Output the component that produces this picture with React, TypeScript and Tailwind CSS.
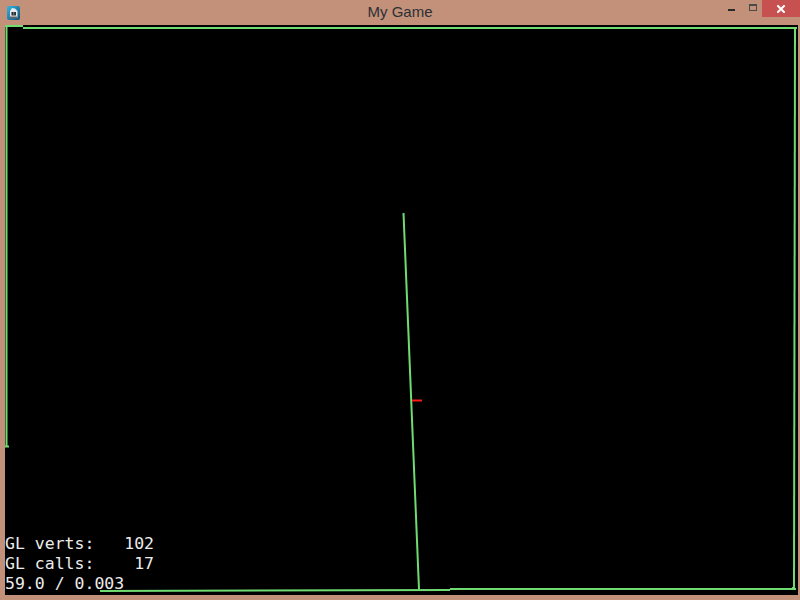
import React from 'react';

const GREEN = '#6fdc72';

const GameIcon = () => (
  <svg width="13" height="14" viewBox="0 0 13 14">
    <defs>
      <linearGradient id="ig" x1="0" y1="0" x2="1" y2="1">
        <stop offset="0" stopColor="#35b6e6" />
        <stop offset="1" stopColor="#0e4f73" />
      </linearGradient>
    </defs>
    <rect x="0" y="0" width="13" height="14" rx="2" fill="url(#ig)" />
    <path d="M5 2 L8 2.5 L10.5 5 L10.5 12 L3 12 L3 5 Z" fill="#e6e8ea" />
    <path d="M4.5 6 L9 6 L9 9.5 L4.5 9.5 Z" fill="#262b30" />
    <path d="M6.5 6 L7.2 6 L7.2 9.5 L6.5 9.5 Z" fill="#9aa2a8" />
    <path d="M3 10.5 L10.5 10.5 L10.5 12.5 L3 12.5 Z" fill="#5d666e" />
  </svg>
);

const TitleBar = () => (
  <div className="relative h-[25px] flex items-center">
    <div className="pl-[7px] pt-px">
      <GameIcon />
    </div>
    <div className="absolute left-0 right-0 top-[3px] text-center text-[15px] leading-[18px] text-[#2b3036] font-['Liberation_Sans',sans-serif]">
      My Game
    </div>
    <div className="ml-auto flex items-start self-start h-[17px]">
      <div className="w-[22px] h-[17px] flex items-start justify-center pt-[9px]">
        <div className="w-[7px] h-[2px] bg-[#2a2a2a]" />
      </div>
      <div className="w-[22px] h-[17px] flex items-start justify-center pt-[4px]">
        <div className="w-[8px] h-[7px] border border-[#4a4a4a] border-t-2" />
      </div>
      <div className="w-[38px] h-[17px] ml-[-2px] bg-[#c75050] flex items-center justify-center">
        <svg width="8" height="8" viewBox="0 0 8 8">
          <path d="M1 1 L7 7 M7 1 L1 7" stroke="#ffffff" strokeWidth="2" strokeLinecap="square" />
        </svg>
      </div>
    </div>
  </div>
);

const Scene = () => (
  <svg className="absolute inset-0" width="793" height="570" viewBox="5 25 793 570">
    <g stroke={GREEN} strokeWidth="2" fill="none">
      <path d="M5 26 L23 26" />
      <path d="M23 28 L797 28" />
      <path d="M6.5 26 L6.5 446" />
      <path d="M5 446.5 L9 446.5" />
      <path d="M795 28 L794 590" />
      <path d="M100 591 L450 590" />
      <path d="M450 589 L796 589" />
      <path d="M403.5 213 L419 589.5" />
    </g>
    <rect x="792" y="587" width="3" height="3" fill={GREEN} />
    <path d="M412 400.5 L422 400.5" stroke="#ff1a1a" strokeWidth="2" />
  </svg>
);

export default function App() {
  return (
    <div className="w-[800px] h-[600px] bg-[#c39179] flex flex-col overflow-hidden">
      <TitleBar />
      <div className="flex-1 pl-[5px] pr-[2px] pb-[5px] flex">
        <div className="relative flex-1 bg-black flex flex-col justify-end pb-px">
          <Scene />
          <div className="relative whitespace-pre text-[16.5px] leading-[20px] text-[#ececec] font-['DejaVu_Sans_Mono',monospace]">
            <div>GL verts:   102</div>
            <div>GL calls:    17</div>
            <div>59.0 / 0.003</div>
          </div>
        </div>
      </div>
    </div>
  );
}
